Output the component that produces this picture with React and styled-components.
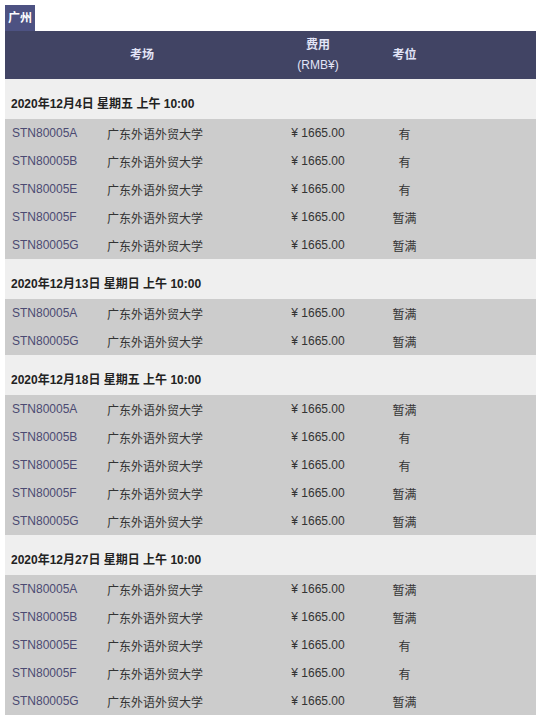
import React from "react";
import styled, { createGlobalStyle } from "styled-components";

const Global = createGlobalStyle`
  html, body { margin: 0; padding: 0; background: #fff; }
  body { font-family: "Liberation Sans", Arial, "Noto Sans CJK SC", sans-serif; font-size: 12px; }
`;

const Page = styled.div`
  padding: 5px 4px 6px 5px;
`;

const Tab = styled.div`
  display: inline-block;
  background: #4d5282;
  color: #fff;
  font-weight: bold;
  font-size: 12px;
  line-height: 26px;
  height: 26px;
  padding: 0 3px;
  vertical-align: top;
`;

const cols = "95px 179px 78px 95px 1fr";

const Header = styled.div`
  display: grid;
  grid-template-columns: 274px 78px 95px 1fr;
  background: #414464;
  color: #e2e5f7;
  height: 48px;
  align-items: center;
  text-align: center;
`;

const HeadCell = styled.div`
  font-weight: ${(p) => (p.$bold ? "bold" : "normal")};
  line-height: 20px;
`;

const Sub = styled.div`
  font-weight: normal;
`;

const DateRow = styled.div`
  background: #efefef;
  height: 40px;
  box-sizing: border-box;
  padding: 15px 0 0 6px;
  line-height: 20px;
  font-weight: bold;
  color: #222;
`;

const Row = styled.div`
  display: grid;
  grid-template-columns: ${cols};
  background: #cccccc;
  height: 28px;
  align-items: center;
  color: #333;
`;

const Code = styled.div`
  padding-left: 7px;
  color: #4b4a72;
`;

const Name = styled.div`
  padding-left: 7px;
`;

const Center = styled.div`
  text-align: center;
`;

const ids = { A: "STN80005A", B: "STN80005B", E: "STN80005E", F: "STN80005F", G: "STN80005G" };

const groups = [
  { date: "2020年12月4日 星期五 上午 10:00", rows: [["A", "有"], ["B", "有"], ["E", "有"], ["F", "暂满"], ["G", "暂满"]] },
  { date: "2020年12月13日 星期日 上午 10:00", rows: [["A", "暂满"], ["G", "暂满"]] },
  { date: "2020年12月18日 星期五 上午 10:00", rows: [["A", "暂满"], ["B", "有"], ["E", "有"], ["F", "暂满"], ["G", "暂满"]] },
  { date: "2020年12月27日 星期日 上午 10:00", rows: [["A", "暂满"], ["B", "暂满"], ["E", "有"], ["F", "有"], ["G", "暂满"]] },
];

export default function App() {
  return (
    <Page>
      <Global />
      <Tab>广州</Tab>
      <Header>
        <HeadCell $bold>考场</HeadCell>
        <HeadCell $bold>
          费用
          <Sub>(RMB¥)</Sub>
        </HeadCell>
        <HeadCell $bold>考位</HeadCell>
        <div />
      </Header>
      {groups.map((g) => (
        <React.Fragment key={g.date}>
          <DateRow>{g.date}</DateRow>
          {g.rows.map(([k, s]) => (
            <Row key={k}>
              <Code>{ids[k]}</Code>
              <Name>广东外语外贸大学</Name>
              <Center>¥ 1665.00</Center>
              <Center>{s}</Center>
              <div />
            </Row>
          ))}
        </React.Fragment>
      ))}
    </Page>
  );
}
